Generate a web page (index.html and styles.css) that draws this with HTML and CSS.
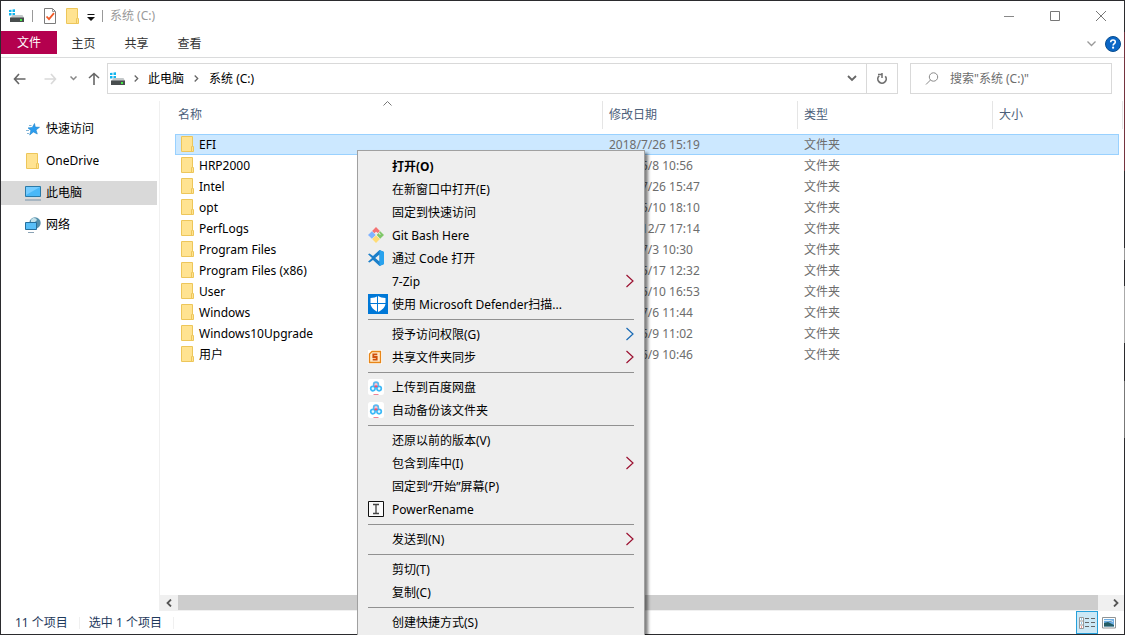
FILE: index.html
```html
<!DOCTYPE html>
<html lang="zh-CN">
<head>
<meta charset="utf-8">
<title>系统 (C:)</title>
<link rel="stylesheet" href="styles.css">
</head>
<body>
<svg class="defs" aria-hidden="true">
  <defs>
    <symbol id="folder" viewBox="0 0 14 16"><path d="M1 .5h10.500v10.500h1v4.500H1z" fill="#ffe391"/><path d="M.5.500h11v10h1v5H.500z" fill="none" stroke="#edc65a"/><path d="M11.500 10.500h-1v5" fill="none" stroke="#edc65a"/></symbol>
    <symbol id="drive" viewBox="0 0 16 14"><path d="M0 1l2.500-.3V3H0zM3.500.5L6 .2V3H3.500zM0 4h2.500v2.500H0zM3.500 4H6v2.700l-2.500-.2z" fill="#10b4ee"/><path d="M3.500 6h10l1.500 3H1.500z" fill="#c3c8c9"/><path d="M1 8.500h14V13H1z" fill="#484d4e"/><path d="M11 10h2v2h-2z" fill="#45ea45"/></symbol>
    <symbol id="chev" viewBox="0 0 8 14"><path d="M.5 1l6.500 6-6.500 6" fill="none" stroke="currentColor" stroke-width="1.200"/></symbol>
    <symbol id="cloud" viewBox="0 0 16 16"><rect width="16" height="16" rx="2.500" fill="#fff"/><circle cx="8" cy="5.500" r="2.400" fill="#ffc3cc" stroke="#5cb8f0" stroke-width="1.600"/><circle cx="4.900" cy="9.600" r="2.200" fill="#eaf8ff" stroke="#3db9f7" stroke-width="1.700"/><circle cx="11.100" cy="9.600" r="2.200" fill="#eaf8ff" stroke="#3db9f7" stroke-width="1.700"/><path d="M6 7.500L8 6l2 1.500L8 8.800z" fill="#f0506e"/><path d="M5.500 15.500h5" stroke="#ef8295"/></symbol>
  </defs>
</svg>
<div class="screen">
<div class="window">
  <header class="titlebar">
    <svg class="i-drive" width="16" height="14"><use href="#drive"/></svg>
    <span class="bar"></span>
    <button class="plain i-props" aria-label="属性"><svg width="12" height="16" viewBox="0 0 12 16"><path d="M.5.500h8l3 3v12H.500z" fill="#fff" stroke="#7b7b7b"/><path d="M8.500.500v3h3" fill="none" stroke="#999"/><path d="M2.500 8.500l2.500 2.700 5-6" fill="none" stroke="#f05a28" stroke-width="1.800"/></svg></button>
    <button class="plain i-new" aria-label="新建文件夹"><svg width="14" height="16"><use href="#folder"/></svg></button>
    <button class="plain i-more" aria-label="自定义"><svg width="8" height="8" viewBox="0 0 8 8"><path d="M.5 1.500h7" stroke="#111"/><path d="M0 4h8L4 8z" fill="#111"/></svg></button>
    <span class="bar"></span>
    <h1 class="title">系统 (C:)</h1>
    <div class="controls">
      <button class="plain" aria-label="最小化"><svg width="12" height="12" viewBox="0 0 12 12"><path d="M1 6.500h10" stroke="#888"/></svg></button>
      <button class="plain" aria-label="最大化"><svg width="12" height="12" viewBox="0 0 12 12"><path d="M1.500 1.500h9v9h-9z" fill="none" stroke="#777"/></svg></button>
      <button class="plain" aria-label="关闭"><svg width="12" height="12" viewBox="0 0 12 12"><path d="M1 1l10 10M11 1L1 11" stroke="#777"/></svg></button>
    </div>
  </header>
  <nav class="ribbon">
    <button class="tab file">文件</button>
    <button class="tab">主页</button>
    <button class="tab">共享</button>
    <button class="tab">查看</button>
    <div class="ribbon-end">
      <button class="plain" aria-label="展开功能区"><svg width="9" height="6" viewBox="0 0 9 6"><path d="M.5.500l4 4 4-4" fill="none" stroke="#999" stroke-width="1.300"/></svg></button>
      <button class="plain" aria-label="帮助"><svg width="16" height="16" viewBox="0 0 16 16"><circle cx="8" cy="8" r="7.500" fill="#0a66c6" stroke="#084d8f"/><path d="M5.700 6.200C5.700 3.300 10.300 3.300 10.300 6c0 1.600-2.200 1.700-2.200 3.500" fill="none" stroke="#fff" stroke-width="1.600"/><circle cx="8.100" cy="11.700" r="1.100" fill="#fff"/></svg></button>
    </div>
  </nav>
  <div class="addressbar">
    <div class="navs">
      <button class="plain" aria-label="后退"><svg width="13" height="12" viewBox="0 0 13 12"><path d="M6 1L1.500 6 6 11M1.500 6H12.500" fill="none" stroke="#666" stroke-width="1.600"/></svg></button>
      <button class="plain" aria-label="前进"><svg width="13" height="12" viewBox="0 0 13 12"><path d="M7 1l4.500 5L7 11M11.500 6H.5" fill="none" stroke="#d9d9d9" stroke-width="1.600"/></svg></button>
      <button class="plain" aria-label="最近"><svg width="7" height="5" viewBox="0 0 7 5"><path d="M.5.500l3 3 3-3" fill="none" stroke="#888" stroke-width="1.500"/></svg></button>
      <button class="plain" aria-label="向上"><svg width="12" height="13" viewBox="0 0 12 13"><path d="M1 6l5-4.500L11 6M6 1.500V13" fill="none" stroke="#666" stroke-width="1.600"/></svg></button>
    </div>
    <div class="path">
      <svg width="16" height="14"><use href="#drive"/></svg>
      <svg class="sep" width="5" height="7" viewBox="0 0 5 7"><path d="M.7.500l3 3-3 3" fill="none" stroke="#666" stroke-width="1.300"/></svg>
      <a href="#pc">此电脑</a>
      <svg class="sep" width="5" height="7" viewBox="0 0 5 7"><path d="M.7.500l3 3-3 3" fill="none" stroke="#666" stroke-width="1.300"/></svg>
      <a href="#c">系统 (C:)</a>
      <button class="plain drop" aria-label="历史"><svg width="10" height="7" viewBox="0 0 10 7"><path d="M1 1l4 4 4-4" fill="none" stroke="#666" stroke-width="1.800"/></svg></button>
      <button class="plain refresh" aria-label="刷新"><svg width="12" height="12" viewBox="0 0 12 12"><path d="M3.200 2.800A4.200 4.200 0 1 0 9.300 3.300" fill="none" stroke="#707070" stroke-width="1.700"/><path d="M2 1.500h4M6 0v5" fill="none" stroke="#707070" stroke-width="1.500"/></svg></button>
    </div>
    <label class="search">
      <svg width="14" height="14" viewBox="0 0 14 14"><circle cx="8.500" cy="5" r="4.200" fill="none" stroke="#8a8a8a"/><path d="M5.500 8L1 12.500" stroke="#8a8a8a"/></svg>
      <input type="text" aria-label="搜索" placeholder="搜索&quot;系统 (C:)&quot;">
    </label>
  </div>
  <div class="body">
    <aside class="tree">
      <a href="#quick"><svg width="16" height="16" viewBox="0 0 16 16"><path d="M9.500 2.500l.8 3.600 4.200.2-3.500 2.600 1.300 4.100-3.900-2-3.700 3 1.200-4.600L3 6.900l4.300-.4z" fill="#2b9df0" stroke="#2184c8" stroke-width=".6"/><path d="M4 4.500h2.500M1 9.500h3M2 12.500h2" stroke="#85b6d8"/></svg>快速访问</a>
      <a href="#onedrive"><svg width="16" height="16"><use href="#folder"/></svg>OneDrive</a>
      <a href="#pc" class="current"><svg width="16" height="16" viewBox="0 0 16 16"><path d="M.5 1.500h15v10H.500z" fill="#49b8f8" stroke="#2a7aa8"/><path d="M1 2h14L1 10z" fill="#75ccff"/><path d="M5 12.500h6" stroke="#c7dce8"/><path d="M0 15h16" stroke="#8ba3b5" stroke-width="1.300"/></svg>此电脑</a>
      <a href="#net"><svg width="16" height="16" viewBox="0 0 16 16"><circle cx="10" cy="6" r="5.700" fill="#548fab"/><path d="M6 3c2-3 5-2 6 0L9 6 6 5z" fill="#c4e2ea"/><path d="M.5 5.500h11v7H.500z" fill="#58bff8" stroke="#246f9d"/><path d="M3 15.500h6" stroke="#8ba3b5"/></svg>网络</a>
    </aside>
    <main class="pane">
      <div class="list">
        <svg class="sort" width="9" height="5" viewBox="0 0 9 5"><path d="M.5 4.500l4-4 4 4" fill="none" stroke="#777"/></svg>
        <table>
          <colgroup><col class="c-name"><col class="c-date"><col class="c-type"><col class="c-size"><col class="c-end"></colgroup>
          <thead><tr><th>名称</th><th>修改日期</th><th>类型</th><th class="size">大小</th><th class="end"></th></tr></thead>
          <tbody>
            <tr class="selected"><td><svg width="14" height="16"><use href="#folder"/></svg>EFI</td><td>2018/7/26 15:19</td><td>文件夹</td><td></td></tr>
            <tr><td><svg width="14" height="16"><use href="#folder"/></svg>HRP2000</td><td>2020/5/8 10:56</td><td>文件夹</td><td></td></tr>
            <tr><td><svg width="14" height="16"><use href="#folder"/></svg>Intel</td><td>2018/7/26 15:47</td><td>文件夹</td><td></td></tr>
            <tr><td><svg width="14" height="16"><use href="#folder"/></svg>opt</td><td>2020/5/10 18:10</td><td>文件夹</td><td></td></tr>
            <tr><td><svg width="14" height="16"><use href="#folder"/></svg>PerfLogs</td><td>2019/12/7 17:14</td><td>文件夹</td><td></td></tr>
            <tr><td><svg width="14" height="16"><use href="#folder"/></svg>Program Files</td><td>2020/7/3 10:30</td><td>文件夹</td><td></td></tr>
            <tr><td><svg width="14" height="16"><use href="#folder"/></svg>Program Files (x86)</td><td>2020/5/17 12:32</td><td>文件夹</td><td></td></tr>
            <tr><td><svg width="14" height="16"><use href="#folder"/></svg>User</td><td>2020/5/10 16:53</td><td>文件夹</td><td></td></tr>
            <tr><td><svg width="14" height="16"><use href="#folder"/></svg>Windows</td><td>2020/7/6 11:44</td><td>文件夹</td><td></td></tr>
            <tr><td><svg width="14" height="16"><use href="#folder"/></svg>Windows10Upgrade</td><td>2020/5/9 11:02</td><td>文件夹</td><td></td></tr>
            <tr><td><svg width="14" height="16"><use href="#folder"/></svg>用户</td><td>2020/5/9 10:46</td><td>文件夹</td><td></td></tr>
          </tbody>
        </table>
      </div>
      <div class="hscroll">
        <button class="plain" aria-label="向左滚动"><svg width="6" height="8" viewBox="0 0 6 8"><path d="M5 .5L1.500 4 5 7.500" fill="none" stroke="#555" stroke-width="1.800"/></svg></button>
        <div class="thumb"></div>
        <button class="plain right" aria-label="向右滚动"><svg width="6" height="8" viewBox="0 0 6 8"><path d="M1 .5L4.500 4 1 7.500" fill="none" stroke="#555" stroke-width="1.800"/></svg></button>
      </div>
    </main>
  </div>
  <footer class="status">
    <span class="count">11 个项目</span>
    <span class="count">选中 1 个项目</span>
    <div class="views">
      <button class="plain on" aria-label="详细信息"><svg width="16" height="14" viewBox="0 0 16 14"><path d="M.5 1.500h4v11h-4zM.5 5h4M.5 9h4" fill="#fff" stroke="#999"/><path d="M2 3h1M2 7h1" stroke="#258ac8"/><path d="M2 11h1" stroke="#d33"/><path d="M6 2.500h4M12 2.500h4M6 6.500h4M12 6.500h4M6 10.500h4M12 10.500h4" stroke="#666"/></svg></button>
      <button class="plain" aria-label="大缩略图"><svg width="14" height="12" viewBox="0 0 14 12"><path d="M.5.500h13v10.500H.500z" fill="#fff" stroke="#8f9496"/><path d="M2 2h10v7.500H2z" fill="#6eafe5"/><path d="M2 6l4-1 6 3v1.500H2z" fill="#245d65"/><path d="M2 3.500h6l3 1" stroke="#d8effb"/></svg></button>
    </div>
  </footer>
</div>

<div class="menu" role="menu">
  <button class="item strong" role="menuitem"><span class="ico"></span>打开(O)</button>
  <button class="item" role="menuitem"><span class="ico"></span>在新窗口中打开(E)</button>
  <button class="item" role="menuitem"><span class="ico"></span>固定到快速访问</button>
  <button class="item" role="menuitem"><span class="ico"><svg width="16" height="16" viewBox="0 0 16 16"><path d="M8 0l3.900 3.900-2 2L8 4.800 6.300 6.300 4.100 4z" fill="#f47373"/><path d="M3.900 4.200L7.700 8l-3.800 3.800L0 8z" fill="#80b3ff"/><path d="M12.200 4.200L16 8l-3.800 3.800L8.700 8l1.800-1.900 1.500 1.900.7-.800-1.700-1.700z" fill="#7fc768"/><path d="M8 8.500l3.900 3.600L8 16l-3.900-3.900z" fill="#ffdc75"/></svg></span>Git Bash Here</button>
  <button class="item" role="menuitem"><span class="ico"><svg width="16" height="16" viewBox="0 0 16 16"><path d="M11.500 0L16 2v12l-4.500 2L5 10 1.500 12.600 0 11.800 4 8 0 4.200l1.500-.8L5 6zM11.500 4.500L7.200 8l4.300 3.500z" fill="#1b7fca" fill-rule="evenodd"/><path d="M11.500 0L16 2v12l-4.500 2z" fill="#29a3ee"/></svg></span>通过 Code 打开</button>
  <button class="item" role="menuitem"><span class="ico"></span>7-Zip<svg class="go" width="8" height="14"><use href="#chev"/></svg></button>
  <button class="item" role="menuitem"><span class="ico"><svg width="20" height="20" viewBox="0 0 20 20"><path d="M0 0h20v20H0z" fill="#0078d7"/><path d="M10 2c2 1.300 4.500 2 7.500 2v5c0 4-3 7-7.500 9-4.500-2-7.500-5-7.500-9V4c3 0 5.500-.7 7.500-2z" fill="#fff"/><path d="M9.500 2v16M2 9.500h16" stroke="#0078d7"/></svg></span>使用 Microsoft Defender扫描...</button>
  <hr>
  <button class="item" role="menuitem"><span class="ico"></span>授予访问权限(G)<svg class="go blue" width="8" height="14"><use href="#chev"/></svg></button>
  <button class="item" role="menuitem"><span class="ico"><svg width="14" height="14" viewBox="0 0 14 14"><path d="M0 0h14v14H0z" fill="#fff"/><path d="M4 1.500h8.500v11h-11V4z" fill="#ffe9c8" stroke="#e78619" stroke-width="1.300"/><path d="M9.300 4.300H5.300V7h3.400v2.700H4.700" fill="none" stroke="#d0500c" stroke-width="1.800"/></svg></span>共享文件夹同步<svg class="go" width="8" height="14"><use href="#chev"/></svg></button>
  <hr>
  <button class="item" role="menuitem"><span class="ico"><svg width="16" height="16"><use href="#cloud"/></svg></span>上传到百度网盘</button>
  <button class="item" role="menuitem"><span class="ico"><svg width="16" height="16"><use href="#cloud"/></svg></span>自动备份该文件夹</button>
  <hr>
  <button class="item" role="menuitem"><span class="ico"></span>还原以前的版本(V)</button>
  <button class="item" role="menuitem"><span class="ico"></span>包含到库中(I)<svg class="go" width="8" height="14"><use href="#chev"/></svg></button>
  <button class="item" role="menuitem"><span class="ico"></span>固定到“开始”屏幕(P)</button>
  <button class="item" role="menuitem"><span class="ico"><svg width="16" height="16" viewBox="0 0 16 16"><path d="M.5.500h15v15H.500z" fill="#fafafa" stroke="#111"/><path d="M5 3.500h2.500L8 4l.5-.5H11M8 4v8M5 12.500h2.500L8 12l.5.500H11" fill="none" stroke="#444" stroke-width="1.300"/></svg></span>PowerRename</button>
  <hr>
  <button class="item" role="menuitem"><span class="ico"></span>发送到(N)<svg class="go" width="8" height="14"><use href="#chev"/></svg></button>
  <hr>
  <button class="item" role="menuitem"><span class="ico"></span>剪切(T)</button>
  <button class="item" role="menuitem"><span class="ico"></span>复制(C)</button>
  <hr>
  <button class="item" role="menuitem"><span class="ico"></span>创建快捷方式(S)</button>
</div>
</div>
</body>
</html>
```
FILE: styles.css
```css
* { box-sizing: border-box; }
body { margin: 0; background: #fff; font: 12px/16px "Noto Sans", "Noto Sans CJK SC", sans-serif; color: #000; }
button, input { font: inherit; color: inherit; }
a { color: inherit; text-decoration: none; }
svg { display: block; flex: none; }
.defs { position: absolute; width: 0; height: 0; }
.plain { display: flex; align-items: center; justify-content: center; border: 0; padding: 0; background: none; }

/* The desktop shows as a thin strip along the right edge of the window. */
.screen {
  position: relative; height: 100vh; overflow: hidden; padding-right: 1px;
  background: linear-gradient(#2b2b2e 5%, #74333f 5%, #74333f 27%, #2b2b2e 27%, #2b2b2e 39%, #999 39%, #999 41%, #2b2b2e 41%, #2b2b2e 45%, #aaa 45%, #aaa 54%, #2b2b2e 54%, #2b2b2e 60%, #777 60%, #777 69%, #2b2b2e 69%);
}
.window { display: flex; flex-direction: column; height: 100%; border: 1px solid #2b2b2e; border-right: 0; background: #fff; }

.titlebar { display: flex; align-items: center; height: 30px; padding: 0 0 1px 8px; }
.bar { width: 1px; height: 12px; background: #999; }
.titlebar .bar:nth-of-type(1) { margin-left: 7px; }
.i-props { margin-left: 11px; }
.i-new { margin-left: 10px; }
.i-more { margin: 2px 7px 0; }
.title { margin: 0 0 0 7px; font-size: 12px; font-weight: 400; color: #999; }
.controls { display: flex; margin-left: auto; }
.controls .plain { width: 46px; height: 29px; }

.ribbon { display: flex; height: 27px; border-bottom: 1px solid #dadbdc; }
.tab { width: 53px; height: 25px; padding: 0; border: 0; background: none; color: #333; }
.tab.file { width: 56px; height: 23px; background: #b4004e; color: #fff; }
.ribbon-end { display: flex; align-items: center; gap: 9px; margin-left: auto; padding-right: 3px; }

.addressbar { display: flex; align-items: center; padding: 5px 12px 1px; height: 37px; }
.navs { display: flex; align-items: center; width: 94px; gap: 14px; }
.navs .plain:nth-child(2) { margin-left: 4px; }
.navs .plain:nth-child(3) { margin-left: -1px; }
.navs .plain:nth-child(4) { margin-left: -3px; }
.path { display: flex; align-items: center; flex: 1; height: 31px; padding-left: 2px; border: 1px solid #d9d9d9; }
.path .sep { margin: 0 9px 0 8px; }
.path a + .sep { margin-left: 10px; margin-right: 10px; }
.drop { width: 29px; height: 29px; margin-left: auto; }
.refresh { width: 31px; height: 29px; border-left: 1px solid #d9d9d9; }
.search { display: flex; align-items: center; width: 202px; height: 31px; margin-left: 12px; padding-left: 14px; border: 1px solid #d9d9d9; }
.search input { flex: 1; min-width: 0; margin-left: 11px; padding: 0; border: 0; outline: 0; }
.search input::placeholder { color: #6d6d6d; opacity: 1; }

.body { display: flex; flex: 1; min-height: 0; padding-top: 6px; }
.tree { display: flex; flex-direction: column; gap: 8px; width: 159px; padding: 16px 2px 0 0; border-right: 1px solid #f0f0f0; }
.tree a { display: flex; align-items: center; gap: 5px; height: 24px; padding-left: 24px; }
.tree .current { background: #d9d9d9; }
.pane { display: flex; flex-direction: column; flex: 1; min-width: 0; }
.list { position: relative; flex: 1; padding: 0 1px 0 15px; }
.sort { position: absolute; left: 223px; top: 0; }
table { width: 100%; border-collapse: separate; border-spacing: 0; table-layout: fixed; }
.c-name { width: 428px; }
.c-date, .c-type { width: 195px; }
.c-end { width: 4px; }
th { height: 28px; padding: 0 0 0 6px; border-right: 1px solid #e5e5e5; font-weight: 400; text-align: left; color: #4c607a; }
th:first-child { padding-left: 3px; }
.size { border-right: 0; }
.end { padding: 0; }
tbody::before { content: ""; display: block; height: 5px; }
td { height: 21px; padding: 0 0 0 6px; color: #6d6d6d; }
td:first-child { display: flex; align-items: center; gap: 4px; color: #000; }
td svg { margin-bottom: 1px; }
.selected td { background: #cce8ff; border: solid #99d1ff; border-width: 1px 0; }
.selected td:first-child { border-left-width: 1px; padding-left: 5px; }
.selected td:last-child { border-right-width: 1px; }

.hscroll { display: flex; height: 16px; padding-bottom: 1px; background: #f0f0f0; }
.hscroll .plain { width: 18px; }
.hscroll .right { width: 26px; padding-left: 10px; }
.thumb { flex: 1; background: #cdcdcd; }

.status { display: flex; align-items: center; height: 23px; padding-left: 14px; color: #1e395b; }
.count { padding-right: 11px; margin-right: 9px; border-right: 1px solid #f0f0f0; line-height: 12px; }
.views { display: flex; margin-left: auto; padding-right: 4px; }
.views .plain { width: 22px; height: 23px; }
.views .on { border: 1px solid #26a0da; background: #cce8f6; }

.menu { position: absolute; left: 357px; top: 150px; width: 288px; padding: 4px 0; border: 1px solid #a0a0a0; background: #eee; box-shadow: 3px 3px 3px rgba(0, 0, 0, .5); }
.item { display: flex; align-items: center; width: 100%; height: 23px; padding: 0 10px; border: 0; background: none; text-align: left; white-space: nowrap; }
.item svg { margin-bottom: 1px; }
.strong { font-weight: 700; }
.ico { display: flex; align-items: center; width: 24px; flex: none; }
.go { margin-left: auto; color: #9b1030; }
.go.blue { color: #1769b5; }
hr { height: 1px; margin: 3px 10px; border: 0; background: #919191; }
```
